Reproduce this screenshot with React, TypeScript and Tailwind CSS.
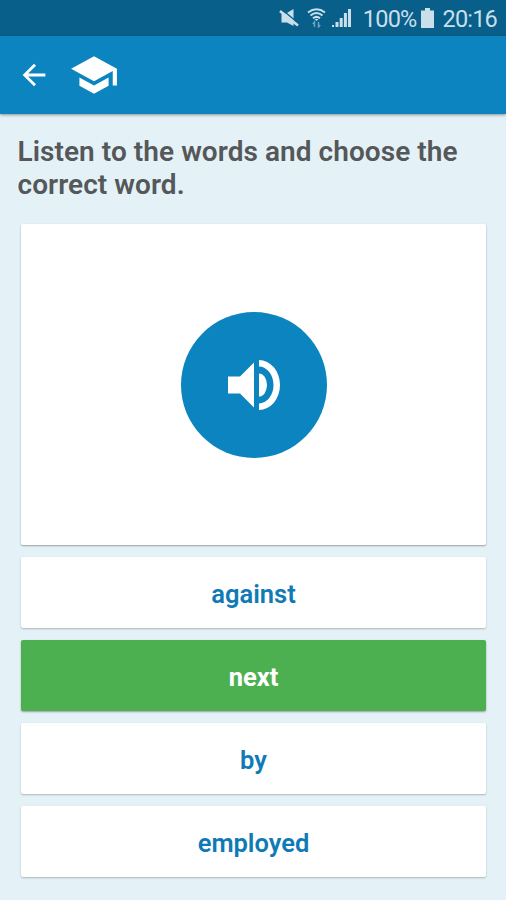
import { type FC } from 'react'

const ANSWERS: Array<{
  word: string
  correct?: boolean
}> = [
  { word: 'against' },
  { word: 'next', correct: true },
  { word: 'by' },
  { word: 'employed' },
]

const StatusBar: FC = () => {
  return (
    <div className="flex h-9 items-center justify-end bg-[#075f8a] pr-[9px] text-[#c9dfea]">
      <svg className="mr-2 h-5 w-5" viewBox="0 0 20 20">
        <path d="M2.5 5.5H7L14.5 1v17L8 14.5H2.5z" fill="currentColor" />
        <path d="M3 1.5L19.5 15.5" stroke="#075f8a" strokeWidth="1.5" />
        <path d="M1 3L19 17.5" stroke="currentColor" strokeWidth="2.6" />
      </svg>
      <svg className="mr-1.5 h-5 w-[19px]" viewBox="0 0 19 20" fill="none" stroke="currentColor">
        <path d="M1 4.5Q9.5-2 18 4.5M3.5 7.5Q9.5 2.5 15.5 7.5M6 10.3Q9.5 7.5 13 10.3" strokeWidth="2" />
        <path d="M7.5 11h4l-2 2z" fill="currentColor" stroke="none" />
        <path d="M7.5 19v-5l-1.7 2M11.5 14v5l1.7-2" strokeWidth="1.4" opacity=".55" />
      </svg>
      <svg className="mr-3 h-5 w-[19px]" viewBox="0 0 19 20" fill="currentColor">
        <path d="M0 17h2v2H0zM3.5 14h3v5h-3zM7.7 10h3v9h-3zM11.9 5h3v14h-3zM16 1h3v18h-3z" />
      </svg>
      <span className="pt-[3px] text-[23.5px] leading-none tracking-[-0.8px]">100%</span>
      <svg className="mr-2 ml-[5px] h-5 w-[13px]" viewBox="0 0 13 20" fill="currentColor">
        <path d="M4 0h5v2.5h4V20H0V2.5h4z" />
      </svg>
      <span className="pt-[3px] text-[23.5px] leading-none tracking-[-0.8px]">20:16</span>
    </div>
  )
}

const AppBar: FC = () => {
  return (
    <header className="flex h-[78px] items-center bg-[#0c84c0] pl-[17px] text-white shadow-[0_1px_3px_rgba(0,0,0,0.4)]">
      <svg className="h-[34px] w-[34px]" viewBox="0 0 24 24" fill="currentColor">
        <path d="M20 11H7.83l5.59-5.59L12 4l-8 8 8 8 1.41-1.41L7.83 13H20v-2z" />
      </svg>
      <svg className="ml-[18px] h-[50px] w-[50px]" viewBox="0 0 24 24" fill="currentColor">
        <path d="M5 13.18v4L12 21l7-3.82v-4L12 17l-7-3.82zM12 3L1 9l11 6 9-4.91V17h2V9L12 3z" />
      </svg>
    </header>
  )
}

const App: FC = () => {
  return (
    <div className="flex h-[900px] w-[506px] flex-col overflow-hidden bg-[#e4f2f8] font-['Roboto',sans-serif]">
      <StatusBar />
      <AppBar />

      <main className="pt-[21px] pr-5 pl-[21px]">
        <h1 className="-mr-4 -ml-[3.5px] text-[28px] leading-[33px] font-semibold tracking-[0.06px] text-[#555759]">
          Listen to the words and choose the correct word.
        </h1>

        <div className="mt-[23px] flex h-[321px] items-center justify-center rounded-[2px] bg-white shadow-[0_1px_2px_rgba(0,0,0,0.35)]">
          <button className="flex h-[146px] w-[146px] items-center justify-center rounded-full bg-[#0c84c0]">
            <svg className="h-[50px] w-[52px]" viewBox="0 0 52 50" fill="white">
              <path d="M0 16.5h12L26 2.5v45L12 33.5H0z" />
              <path d="M31 13.5a8 11.5 0 0 1 0 23z" />
              <path d="M31 0a21 25 0 0 1 0 50v-6.5a14.5 18.5 0 0 0 0-37z" />
            </svg>
          </button>
        </div>

        <div className="mt-3 flex flex-col gap-3">
          {ANSWERS.map((answer) => {
            return (
              <button
                key={answer.word}
                className={
                  answer.correct
                    ? 'h-[71px] rounded-[2px] bg-[#4caf50] pt-[3px] text-[25.5px] font-bold text-white shadow-[0_1px_2px_rgba(0,0,0,0.35)]'
                    : 'h-[71px] rounded-[2px] bg-white pt-[3px] text-[25.5px] font-semibold text-[#0f7ab5] shadow-[0_1px_2px_rgba(0,0,0,0.25)]'
                }
              >
                {answer.word}
              </button>
            )
          })}
        </div>
      </main>
    </div>
  )
}

export default App
